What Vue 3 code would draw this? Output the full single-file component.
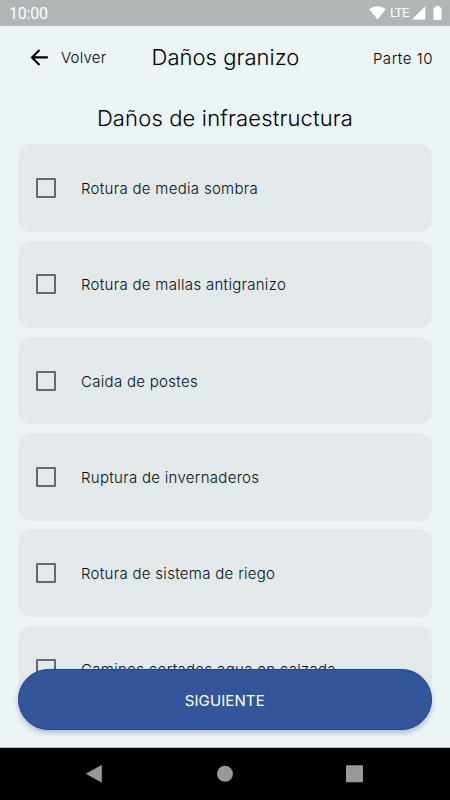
<script setup>
import { ref } from 'vue'

const options = ref([
  { label: 'Rotura de media sombra', checked: false },
  { label: 'Rotura de mallas antigranizo', checked: false },
  { label: 'Caida de postes', checked: false },
  { label: 'Ruptura de invernaderos', checked: false },
  { label: 'Rotura de sistema de riego', checked: false },
  { label: 'Caminos cortados agua en calzada', checked: false },
])
</script>

<template>
  <div class="screen">
    <header class="status">
      <span class="clock">10:00</span>
      <div class="signals">
        <svg class="wifi" viewBox="0 0 17 14"><path d="M.3 3.200C5 -.8 12 -.8 16.700 3.200L8.500 13.500Z" fill="#fff" /></svg>
        <span class="lte">LTE</span>
        <svg class="cell" viewBox="0 0 14 14"><path d="M13.300 .2V13.500H0Z" fill="#fff" /></svg>
        <svg class="battery" viewBox="0 0 9 14"><path d="M2.500 0h4v1.500H8q.5 0 .5.600V13.400q0 .6-.6.600H1.100q-.6 0-.6-.6V2.100q0-.6.6-.6H2.500Z" fill="#fff" /></svg>
      </div>
    </header>

    <nav class="topbar">
      <button class="back">
        <svg viewBox="0 0 18 18"><path d="M17.800 8.400H2M9.500 .9L2 8.400l7.500 7.500" fill="none" stroke="#000" stroke-width="2.100" /></svg>
        <span>Volver</span>
      </button>
      <h1>Daños granizo</h1>
      <span class="part">Parte 10</span>
    </nav>

    <main class="content">
      <h2>Daños de infraestructura</h2>
      <div class="list">
        <label v-for="option in options" :key="option.label" class="card">
          <input v-model="option.checked" type="checkbox" />
          <span>{{ option.label }}</span>
        </label>
      </div>
    </main>

    <button class="next">SIGUIENTE</button>

    <footer class="navbar">
      <svg viewBox="0 0 450 52">
        <path d="M86.300 25.800L101.600 17.300V34.300Z" fill="#999" stroke="#999" stroke-width=".6" stroke-linejoin="round" />
        <circle cx="225" cy="25.800" r="8" fill="#999" />
        <rect x="346" y="17.300" width="17" height="17" rx=".8" fill="#999" />
      </svg>
    </footer>
  </div>
</template>

<style>
body {
  margin: 0;
  overflow: hidden;
}
</style>

<style scoped>
.screen {
  position: relative;
  display: flex;
  flex-direction: column;
  width: 450px;
  height: 800px;
  overflow: hidden;
  background: #ebf3f5;
  color: #000;
  font-family: Inter, sans-serif;
  font-weight: 300;
}
.status {
  flex: none;
  display: flex;
  align-items: center;
  justify-content: space-between;
  box-sizing: border-box;
  height: 26px;
  padding: 0 8px 0 9px;
  background: #b0b6b6;
  color: #fff;
  font-family: Roboto, sans-serif;
  font-weight: 400;
}
.clock {
  padding-top: 2px;
  font-size: 16px;
  line-height: 26px;
  letter-spacing: -0.2px;
}
.signals {
  display: flex;
  align-items: center;
}
.wifi {
  width: 17px;
  height: 14px;
}
.lte {
  margin: 0 3px 0 4px;
  font-size: 13px;
  line-height: 26px;
  letter-spacing: -0.5px;
}
.cell {
  width: 14px;
  height: 14px;
}
.battery {
  width: 9px;
  height: 14px;
  margin-left: 7px;
}
.topbar {
  flex: none;
  display: grid;
  grid-template-columns: 1fr auto 1fr;
  align-items: center;
  height: 62px;
  padding: 0 17px 0 18px;
}
button {
  border: 0;
  font: inherit;
}
.back {
  display: flex;
  align-items: center;
  gap: 13px;
  padding: 1px 0 0 12px;
  background: none;
  color: #000;
  font-size: 15px;
  letter-spacing: 0.25px;
}
.back svg {
  width: 18px;
  height: 18px;
}
h1,
h2 {
  margin: 0;
  font-size: 22px;
  line-height: 30px;
  font-weight: 300;
  text-align: center;
}
h1 {
  letter-spacing: 0.03px;
}
h2 {
  letter-spacing: 0.15px;
}
.part {
  justify-self: end;
  padding-top: 2px;
  font-size: 15px;
  letter-spacing: 0.550px;
}
.content {
  flex: 1;
  min-height: 0;
  overflow: hidden;
  padding: 15px 18px 0;
}
.list {
  display: flex;
  flex-direction: column;
  gap: 8.750px;
  margin-top: 11.300px;
}
.card {
  flex: none;
  display: flex;
  align-items: center;
  box-sizing: border-box;
  height: 87.500px;
  padding-left: 18px;
  border-radius: 13px;
  background: #e3e8ea;
  color: #001014;
  font-size: 15px;
  letter-spacing: 0.3px;
}
.card input {
  appearance: none;
  box-sizing: border-box;
  width: 20px;
  height: 20px;
  margin: 0 25px 0 0;
  border: 2px solid #646969;
  border-radius: 1px;
}
.card input:checked {
  background: #33569b;
}
.card span {
  padding-top: 1px;
}
.next {
  position: absolute;
  left: 17.500px;
  right: 18px;
  top: 669px;
  height: 61px;
  padding: 1px 0 0;
  border: 1px solid #174493;
  border-radius: 31px;
  background: #33569b;
  box-shadow: 0 3px 5px rgba(20, 50, 110, 0.28);
  color: #fff;
  font-size: 15px;
  font-weight: 400;
  letter-spacing: 0.12px;
}
.navbar {
  flex: none;
  box-sizing: border-box;
  height: 53px;
  border-top: 1px solid #b0b6b7;
  background: #000;
}
.navbar svg {
  display: block;
  width: 450px;
  height: 52px;
}
</style>
